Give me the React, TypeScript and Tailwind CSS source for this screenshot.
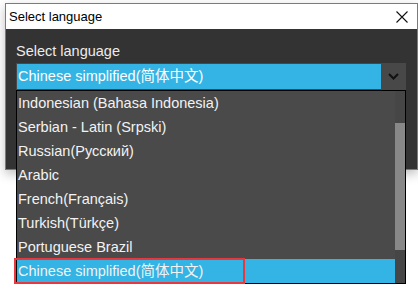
import React from "react";

const languages = [
  "Indonesian (Bahasa Indonesia)",
  "Serbian - Latin (Srpski)",
  "Russian(Русский)",
  "Arabic",
  "French(Français)",
  "Turkish(Türkçe)",
  "Portuguese Brazil",
  "Chinese simplified(简体中文)",
];

const selected = "Chinese simplified(简体中文)";

const font = { fontFamily: '"Liberation Sans", Arial, "Noto Sans CJK SC", sans-serif' };

export default function App() {
  return (
    <div className="relative w-[418px] h-[288px] overflow-hidden bg-white" style={font}>
      {/* Dialog window */}
      <div className="ml-[5px] mt-[3px] w-[413px] h-[167px] border border-[#2d8fe3] bg-[#333333] shadow-[0_4px_10px_rgba(0,0,0,0.25)] flex flex-col">
        <div className="h-[25px] bg-white flex items-center justify-between pl-[3px] pr-[8px]">
          <span className="text-[13px] text-black">Select language</span>
          <svg width="12" height="12" viewBox="0 0 12 12" className="mr-[1px]">
            <path d="M0.5 0.5 L11.5 11.5 M11.5 0.5 L0.5 11.5" stroke="#111" strokeWidth="1.1" />
          </svg>
        </div>

        <div className="pl-[10px] pr-[11px] pt-[12px]">
          <div className="text-[14.5px] leading-[20px] text-[#ececec]">Select language</div>
          <div className="mt-[2px] h-[27px] flex bg-[#484848] p-px">
            <div className="flex-1 bg-[#33b4e4] text-[14.5px] leading-[25px] text-white pl-[1px]">
              {selected}
            </div>
            <div className="w-[24px] flex items-center justify-center">
              <svg width="11" height="7" viewBox="0 0 11 7">
                <path d="M1 1 L5.5 5.5 L10 1" fill="none" stroke="#111" strokeWidth="2" />
              </svg>
            </div>
          </div>
        </div>
      </div>

      {/* Open dropdown list */}
      <div className="absolute left-[16px] top-[90px] w-[390px] h-[194px] border border-black bg-[#4a4a4a] flex">
        <div className="flex-1 flex flex-col">
          {languages.map((l) => (
            <div
              key={l}
              className={`h-[24px] shrink-0 text-[14.5px] leading-[24px] text-[#f2f2f2] pl-[1px] ${
                l === selected ? "bg-[#33b4e4]" : ""
              }`}
            >
              {l}
            </div>
          ))}
        </div>
        <div className="w-[10px] bg-[#464646] pt-[32px]">
          <div className="h-[127px] bg-[#888888]" />
        </div>
      </div>

      {/* Highlight annotation */}
      <div className="absolute left-[14px] top-[258px] w-[231px] h-[26px] border-2 border-[#e8383d]" />
    </div>
  );
}
